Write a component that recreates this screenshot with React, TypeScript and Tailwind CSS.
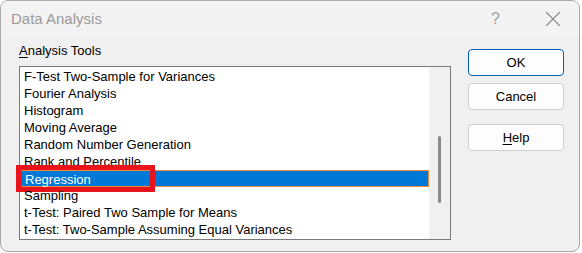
import { X } from 'lucide-react'

const TOOLS = [
  'F-Test Two-Sample for Variances',
  'Fourier Analysis',
  'Histogram',
  'Moving Average',
  'Random Number Generation',
  'Rank and Percentile',
  'Regression',
  'Sampling',
  't-Test: Paired Two Sample for Means',
  't-Test: Two-Sample Assuming Equal Variances',
]

const SELECTED = 'Regression'

function DialogButton({ label, hotkey, primary }: { label: string; hotkey?: number; primary?: boolean }) {
  // hotkey = index of the underlined access-key letter
  return (
    <button
      type="button"
      className={`w-[96px] h-[27px] rounded-[4px] text-[13px] text-black bg-[#fdfdfd] ${
        primary ? 'border border-[#005fb8]' : 'border border-[#d0d0d0]'
      }`}
    >
      {hotkey === undefined ? (
        label
      ) : (
        <>
          {label.slice(0, hotkey)}
          <span className="underline underline-offset-2">{label[hotkey]}</span>
          {label.slice(hotkey + 1)}
        </>
      )}
    </button>
  )
}

export default function App() {
  return (
    <div className="w-[582px] h-[253px] bg-white" style={{ fontFamily: '"Liberation Sans", Arial, sans-serif' }}>
      <div className="w-[580px] h-[252px] rounded-[8px] border border-[#a9a9a9] bg-[#f0f0f0] overflow-hidden flex flex-col">
        {/* Title bar */}
        <div className="h-[36px] shrink-0 bg-[#f3f3f3] flex items-center pl-[10px] pr-[13px]">
          <span className="text-[15px] text-[#9a9a9a]">Data Analysis</span>
          <span className="ml-auto text-[16px] text-[#a0a0a0] mr-[40px]">?</span>
          <X className="w-[26px] h-[26px] text-[#8c8c8c]" strokeWidth={1} />
        </div>

        {/* Body */}
        <div className="flex flex-1">
          <div className="ml-[18px] flex flex-col">
            <div className="h-[29px] pt-[5px] text-[13px] leading-[18px] text-black">
              <span className="underline underline-offset-2">A</span>nalysis Tools
            </div>
            <div className="w-[432px] h-[174px] border border-[#7a7a7a] bg-white flex">
              <div className="w-[409px] pt-[1px]">
                {TOOLS.map((t) => {
                  const sel = t === SELECTED
                  return (
                    <div
                      key={t}
                      className={`relative h-[17px] pl-[4px] text-[13px] leading-[17px] whitespace-nowrap ${
                        sel ? 'bg-[#0078d7] text-white border border-[#f0883a] pl-[3px] leading-[15px]' : 'text-black'
                      }`}
                    >
                      {t}
                      {sel && (
                        <div className="absolute left-[-5px] top-[-6px] w-[139px] h-[27px] border-[5px] border-[#e8141c]" />
                      )}
                    </div>
                  )
                })}
              </div>
              <div className="flex-1 bg-[#f0f0f0] flex justify-center pt-[69px]">
                <div className="w-[3px] h-[67px] rounded-full bg-[#8a8a8a]" />
              </div>
            </div>
          </div>

          <div className="ml-[17px] pt-[12px] flex flex-col">
            <DialogButton label="OK" primary />
            <div className="h-[7px]" />
            <DialogButton label="Cancel" />
            <div className="h-[14px]" />
            <DialogButton label="Help" hotkey={0} />
          </div>
        </div>
      </div>
    </div>
  )
}
